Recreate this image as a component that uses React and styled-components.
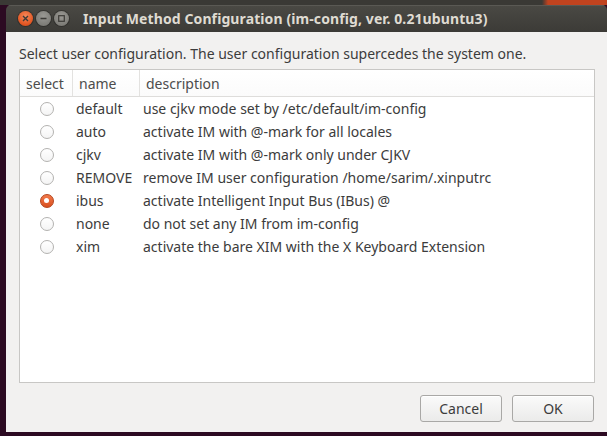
import React, { useState } from 'react';
import styled, { createGlobalStyle } from 'styled-components';

const GlobalStyle = createGlobalStyle`
  html, body {
    margin: 0;
    padding: 0;
    overflow: hidden;
  }
  body {
    font-family: 'Noto Sans', 'DejaVu Sans', sans-serif;
  }
`

const Desktop = styled.div`
  width: 607px;
  height: 436px;
  box-sizing: border-box;
  padding: 5px 0 4px 6px;
  background:
    linear-gradient(to right, #3a3935 0 542px, #c0431f 548px) top left / 100% 5px no-repeat,
    #2c0a22;
  display: flex;
  overflow: hidden;
`

const Window = styled.div`
  flex: 1;
  display: flex;
  flex-direction: column;
  border-radius: 5px 5px 0 0;
  overflow: hidden;
`

const TitleBar = styled.div`
  height: 27px;
  flex: none;
  display: flex;
  align-items: center;
  padding-left: 12px;
  background: linear-gradient(#4a4944, #3c3b37);
  box-shadow: inset 0 1px 0 #5a5954;
`

const WinButtons = styled.div`
  display: flex;
  gap: 3px;
  margin-right: 14px;
`

const WinButton = styled.div`
  width: 15px;
  height: 15px;
  border-radius: 50%;
  display: flex;
  align-items: center;
  justify-content: center;
  background: ${p => p.close
    ? 'radial-gradient(circle at 50% 35%, #f78a5c, #e0531f 70%, #c3461a)'
    : 'radial-gradient(circle at 50% 35%, #9a9994, #7e7d78 70%, #6c6b66)'};
  box-shadow: 0 0 0 1px rgba(0, 0, 0, 0.25);
`

const Title = styled.div`
  color: #dfdbd2;
  font-weight: bold;
  font-size: 14px;
  letter-spacing: 0.1px;
  white-space: nowrap;
`

const Body = styled.div`
  flex: 1;
  background: #f2f1f0;
  display: flex;
  flex-direction: column;
  padding: 13px 12px 13px 13px;
`

const Prompt = styled.div`
  font-size: 14px;
  color: #3c3c3c;
  height: 17px;
  line-height: 17px;
  white-space: nowrap;
`

const TableBox = styled.div`
  margin-top: 7px;
  height: 312px;
  background: #fff;
  border: 1px solid #c8c7c5;
  display: flex;
  flex-direction: column;
`

const HeaderRow = styled.div`
  display: grid;
  grid-template-columns: 53px 67px 1fr;
  height: 26px;
  border-bottom: 1px solid #dedddb;
  background: linear-gradient(#ffffff, #fbfbfb);
`

const HeaderCell = styled.div`
  display: flex;
  align-items: center;
  padding-left: 6px;
  font-size: 14px;
  color: #4c4c4c;
  border-right: ${p => (p.last ? 'none' : '1px solid #e3e2e0')};
`

const Row = styled.div`
  display: grid;
  grid-template-columns: 53px 67px 1fr;
  height: 23px;
  align-items: center;
  font-size: 14px;
  color: #3c3c3c;
  white-space: nowrap;
  cursor: pointer;
  &:first-of-type {
    margin-top: 1px;
  }
`

const RadioCell = styled.div`
  display: flex;
  justify-content: center;
`

const Radio = styled.div`
  width: 14px;
  height: 14px;
  box-sizing: border-box;
  border-radius: 50%;
  display: flex;
  align-items: center;
  justify-content: center;
  border: 1px solid ${p => (p.checked ? '#b4441c' : '#b3b2b0')};
  background: ${p => p.checked
    ? 'linear-gradient(#f27a4c, #d9501f)'
    : 'linear-gradient(#ffffff, #f4f4f4)'};
  &::after {
    content: '';
    display: ${p => (p.checked ? 'block' : 'none')};
    width: 5px;
    height: 5px;
    border-radius: 50%;
    background: #fff;
  }
`

const NameCell = styled.div`
  padding-left: 3px;
`

const DescCell = styled.div`
  padding-left: 3px;
`

const Footer = styled.div`
  margin-top: 12px;
  display: flex;
  justify-content: flex-end;
  gap: 10px;
  padding-right: 1px;
`

const Button = styled.button`
  width: 82px;
  height: 27px;
  border: 1px solid #a9a8a6;
  border-radius: 3px;
  background: linear-gradient(#fafafa, #ebebea);
  box-shadow: inset 0 1px 0 #fff;
  font-family: 'Noto Sans', 'DejaVu Sans', sans-serif;
  font-size: 14px;
  color: #3c3c3c;
  padding: 0;
`

const configs = [
  { name: 'default', description: 'use cjkv mode set by /etc/default/im-config' },
  { name: 'auto', description: 'activate IM with @-mark for all locales' },
  { name: 'cjkv', description: 'activate IM with @-mark only under CJKV' },
  { name: 'REMOVE', description: 'remove IM user configuration /home/sarim/.xinputrc' },
  { name: 'ibus', description: 'activate Intelligent Input Bus (IBus) @' },
  { name: 'none', description: 'do not set any IM from im-config' },
  { name: 'xim', description: 'activate the bare XIM with the X Keyboard Extension' },
]

const App = () => {
  const [selected, setSelected] = useState('ibus')

  return (
    <>
      <GlobalStyle />
      <Desktop>
        <Window>
          <TitleBar>
            <WinButtons>
              <WinButton close>
                <svg width="7" height="7" viewBox="0 0 7 7">
                  <path d="M1 1L6 6M6 1L1 6" stroke="#3c3b37" strokeWidth="1.4" />
                </svg>
              </WinButton>
              <WinButton>
                <svg width="7" height="7" viewBox="0 0 7 7">
                  <path d="M0.5 3.5H6.5" stroke="#3c3b37" strokeWidth="1.4" />
                </svg>
              </WinButton>
              <WinButton>
                <svg width="7" height="7" viewBox="0 0 7 7">
                  <rect x="0.7" y="0.7" width="5.6" height="5.6" fill="none" stroke="#3c3b37" strokeWidth="1.2" />
                </svg>
              </WinButton>
            </WinButtons>
            <Title>Input Method Configuration (im-config, ver. 0.21ubuntu3)</Title>
          </TitleBar>
          <Body>
            <Prompt>Select user configuration. The user configuration supercedes the system one.</Prompt>
            <TableBox>
              <HeaderRow>
                <HeaderCell>select</HeaderCell>
                <HeaderCell>name</HeaderCell>
                <HeaderCell last>description</HeaderCell>
              </HeaderRow>
              {configs.map(item => (
                <Row key={item.name} onClick={() => setSelected(item.name)}>
                  <RadioCell>
                    <Radio checked={selected === item.name} />
                  </RadioCell>
                  <NameCell>{item.name}</NameCell>
                  <DescCell>{item.description}</DescCell>
                </Row>
              ))}
            </TableBox>
            <Footer>
              <Button>Cancel</Button>
              <Button>OK</Button>
            </Footer>
          </Body>
        </Window>
      </Desktop>
    </>
  )
}

export default App;
